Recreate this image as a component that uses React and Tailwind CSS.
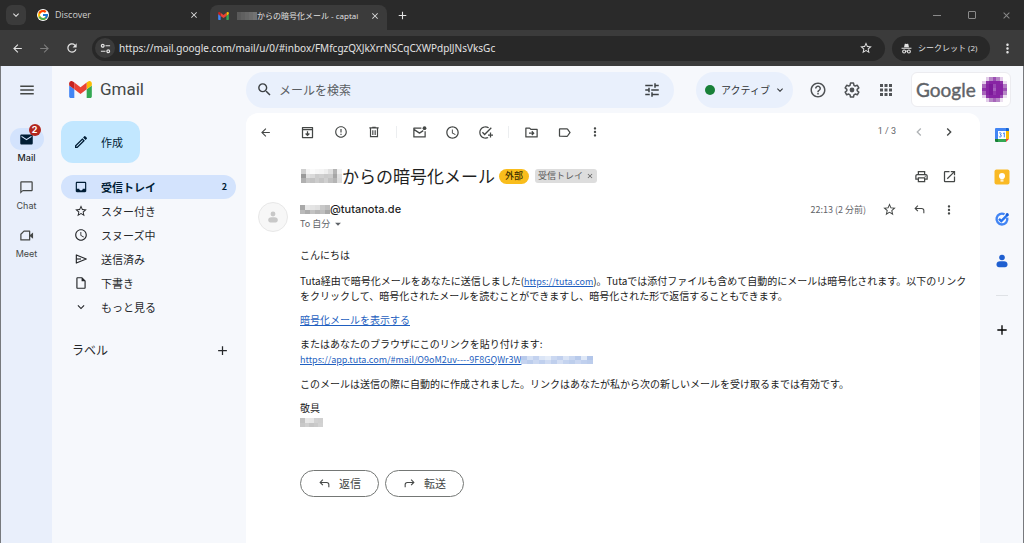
import React from "react";
import {
  MdAdd, MdAddTask, MdApps, MdArrowBack, MdArrowDropDown, MdArrowForward, MdChatBubbleOutline, MdChevronLeft,
  MdChevronRight, MdClose, MdErrorOutline, MdExpandMore, MdHelpOutline, MdInbox, MdLabelOutline, MdMail, MdMenu,
  MdMoreVert, MdOpenInNew, MdOutlineInsertDriveFile, MdOutlineModeEdit,
  MdOutlinePrint, MdRefresh, MdSchedule, MdSearch, MdStarBorder, MdTune,
} from "react-icons/md";
import { FcGoogle } from "react-icons/fc";

function GmailMark({ className }) {
  return (
    <svg viewBox="52 42 88 66" className={className} aria-hidden="true">
      <path fill="#4285f4" d="M58 108h14V74L52 59v43c0 3.32 2.69 6 6 6" />
      <path fill="#34a853" d="M120 108h14c3.32 0 6-2.69 6-6V59l-20 15" />
      <path fill="#fbbc04" d="M120 48v26l20-15v-8c0-7.42-8.47-11.65-14.4-7.2" />
      <path fill="#ea4335" d="M72 74V48l24 18 24-18v26L96 92" />
      <path fill="#c5221f" d="M52 51v8l20 15V48l-5.6-4.2c-5.94-4.45-14.4-.22-14.4 7.2" />
    </svg>
  );
}

/* Pixelated patch that hides a private name. */
function Mosaic({ rows, className }) {
  return (
    <svg
      viewBox={`0 0 ${rows[0].length} ${rows.length}`}
      preserveAspectRatio="none"
      shapeRendering="crispEdges"
      className={className}
      aria-hidden="true"
    >
      {rows.map((row, y) => row.map((c, x) => <rect key={`${x}-${y}`} x={x} y={y} width="1" height="1" fill={c} />))}
    </svg>
  );
}

const nameRows = [
  ["#cfcfcf", "#f4f4f4", "#fafafa", "#f6f6f6", "#f4f4f4", "#eeeeee", "#e0e0e0", "#b4b4b4", "#f0f0f0"],
  ["#9a9a9a", "#e0e0e0", "#dadada", "#cccccc", "#d0d0d0", "#cacaca", "#cccccc", "#a6a6a6", "#e0e0e0"],
  ["#b0b0b0", "#c6c6c6", "#c2c2c2", "#cccccc", "#c4c4c4", "#cfcfcf", "#c0c0c0", "#b4b4b4", "#dcdcdc"],
];
const senderRows = [
  ["#a8a8a8", "#e8e8e8", "#e4e4e4", "#e0e0e0", "#c8c8c8", "#bebebe"],
  ["#bababa", "#acacac", "#c2c2c2", "#b6b6b6", "#bebebe", "#a8a8a8"],
];
const signRows = [
  ["#c2c2c2", "#e8e8e8", "#e6e6e6", "#d2d2d2", "#d0d0d0"],
  ["#c8c8c8", "#d0d0d0", "#c6c6c6", "#cacaca", "#d2d2d2"],
];
const urlRows = [
  ["#b9cbec", "#d3dff4", "#c3d2ef", "#dbe5f6", "#e3ebf8", "#cbd8f1", "#c1d0ee", "#d9e3f5", "#c8d6f0", "#b8caeb", "#dfe8f7", "#b3c6ea"],
  ["#c5d3f0", "#bccdec", "#cbd8f1", "#c0d0ee", "#cfdbf2", "#bfcfed", "#d3def3", "#c4d3ef", "#bdceec", "#cad7f1", "#c0d0ee", "#bccdec"],
];
const tabRows = [["#5a5a5a", "#606060", "#666666", "#6c6c6c", "#737373"]];
const avatarRows = [
  ["#fff", "#e3cdea", "#b787c6", "#9c4fb4", "#b787c6", "#e3cdea", "#fff"],
  ["#e3cdea", "#8e33a8", "#8824a4", "#8824a4", "#8824a4", "#8e33a8", "#ecdff0"],
  ["#a765ba", "#8824a4", "#7d1a9b", "#9a4ab4", "#8824a4", "#8824a4", "#b27ac3"],
  ["#8e33a8", "#8824a4", "#7d1a9b", "#a65fbd", "#8824a4", "#8824a4", "#9c4fb4"],
  ["#a765ba", "#8824a4", "#7d1a9b", "#9338ad", "#8824a4", "#8824a4", "#b787c6"],
  ["#e3cdea", "#8e33a8", "#8824a4", "#8824a4", "#8824a4", "#9c4fb4", "#ecdff0"],
  ["#fff", "#e3cdea", "#b787c6", "#a765ba", "#b787c6", "#ecdff0", "#fff"],
];

function SiteSettingsIcon({ className }) {
  return (
    <svg viewBox="0 0 12 12" className={className} fill="none" stroke="currentColor" strokeWidth="1.3" aria-hidden="true">
      <circle cx="3" cy="3" r="1.5" />
      <path d="M6 3h5M1 9h5" />
      <circle cx="9" cy="9" r="1.5" />
    </svg>
  );
}

function IncognitoIcon({ className }) {
  return (
    <svg viewBox="0 0 12 12" className={className} aria-hidden="true">
      <path fill="currentColor" d="M3.300 4.600 4 1.300c.1-.5.500-.6.900-.5L6 1.200l1.100-.4c.4-.1.800 0 .9.500l.7 3.300zM.6 5.200h10.800v1.200H.6z" />
      <g fill="none" stroke="currentColor" strokeWidth="1.200">
        <circle cx="3.400" cy="9.300" r="1.600" />
        <circle cx="8.600" cy="9.300" r="1.600" />
        <path d="M5 9c.6-.4 1.400-.4 2 0" />
      </g>
    </svg>
  );
}

function LineIcon({ className, children }) {
  return (
    <svg viewBox="0 0 24 24" className={className} fill="none" stroke="currentColor" strokeWidth="2" aria-hidden="true">
      {children}
    </svg>
  );
}

const ArchiveIcon = ({ className }) => (
  <LineIcon className={className}>
    <path strokeLinejoin="round" d="M4 4h16v16H4zM4 7.500h16" />
    <path d="M12 10v6M9 13.500l3 3 3-3" />
  </LineIcon>
);

const TrashIcon = ({ className }) => (
  <LineIcon className={className}>
    <path d="M4 5h16M9 4h6M6 5.500V20h12V5.500M10 9v8M14 9v8" />
  </LineIcon>
);

const UnreadIcon = ({ className }) => (
  <LineIcon className={className}>
    <path strokeLinejoin="round" d="M15 5H3v14h18V10M3 7l9 6 6-4" />
    <circle cx="20" cy="5" r="3" fill="currentColor" stroke="none" />
  </LineIcon>
);

const MoveIcon = ({ className }) => (
  <LineIcon className={className}>
    <path strokeLinejoin="round" d="M3 5h6l2 2h10v12H3z" />
    <path d="M8 13h7M12.500 10l3 3-3 3" />
  </LineIcon>
);

const SendIcon = ({ className }) => (
  <LineIcon className={className}>
    <path strokeLinejoin="round" d="M4 5l17 7-17 7z" />
    <path d="M4 12h8" />
  </LineIcon>
);

const ReplyIcon = ({ className }) => (
  <LineIcon className={className}>
    <path d="M9 5 4 10l5 5M4 10h12a4 4 0 0 1 4 4v5" />
  </LineIcon>
);

const MeetIcon = ({ className }) => (
  <LineIcon className={className}>
    <path strokeLinejoin="round" d="M8 5h9v14H3v-9z" />
    <path fill="currentColor" stroke="none" d="m17.500 11 5-4v10l-5-4z" />
  </LineIcon>
);

function PersonIcon({ className }) {
  return (
    <svg viewBox="0 0 16 16" className={className} fill="currentColor" aria-hidden="true">
      <circle cx="8" cy="4.500" r="2.800" />
      <path d="M2.500 11.500c0-2 1.500-3.200 3.500-3.200h4c2 0 3.500 1.200 3.500 3.200 0 1.700-1 2.700-2.500 2.700H5c-1.500 0-2.500-1-2.500-2.700z" />
    </svg>
  );
}

function CalendarLogo() {
  return (
    <svg viewBox="0 0 16 16" className="size-4" aria-hidden="true">
      <path fill="#4285f4" d="M2 1h10v3H4v8H1V2a1 1 0 0 1 1-1z" />
      <path fill="#1967d2" d="M12 1h2a1 1 0 0 1 1 1v2h-3z" />
      <path fill="#fbbc04" d="M12 4h3v8h-3z" />
      <path fill="#34a853" d="M4 12h8v3H4z" />
      <path fill="#188038" d="M1 12h3v3H2a1 1 0 0 1-1-1z" />
      <path fill="#ea4335" d="M12 12h3l-3 3z" />
      <path fill="#fff" d="M4 4h8v8H4z" />
      <path fill="none" stroke="#4285f4" d="M5 6.300c.6-.9 2.300-.7 2.200.4 0 .7-.6 1-1.200 1 .8 0 1.400.4 1.400 1.200 0 1.200-2 1.500-2.600.3M9 6.600l1.300-.8v4.500" />
    </svg>
  );
}

function KeepLogo() {
  return (
    <svg viewBox="0 0 16 16" className="size-4" aria-hidden="true">
      <rect x=".5" y=".5" width="15" height="15" rx="2" fill="#f9b924" />
      <circle cx="8" cy="7" r="3" fill="#fff" />
      <path fill="#fff" d="M6.500 9h3v1.500h-3zM6.500 11.200h3v1.200h-3z" />
    </svg>
  );
}

function TasksLogo() {
  return (
    <svg viewBox="0 0 16 16" className="size-4" fill="none" aria-hidden="true">
      <path stroke="#4285f4" strokeWidth="2.400" d="M13.200 6.800A5.400 5.400 0 1 1 10.500 3.300" />
      <path stroke="#2874f0" strokeWidth="2.400" d="m5 7.800 2.300 2.300L14 3.400" />
      <circle cx="13.200" cy="3.600" r="1.500" fill="#1a5fd8" />
    </svg>
  );
}

function IconButton({ label, className = "", children }) {
  return (
    <button type="button" aria-label={label} className={`flex shrink-0 items-center justify-center ${className}`}>
      {children}
    </button>
  );
}

function BrowserChrome() {
  return (
    <header className="bg-[#3b3b3b] font-['Open_Sans','Noto_Sans_CJK_JP',sans-serif] text-[#e3e3e3]">
      <div className="flex h-[30px] items-center bg-[#2a2a2a] pl-[6px]">
        <IconButton label="タブを検索" className="size-5 rounded-md bg-[#3b3b3b]">
          <MdExpandMore className="size-3" />
        </IconButton>
        <div className="flex w-[184px] items-center pr-2 pl-[11px] text-[9px]">
          <span className="flex size-3 items-center justify-center rounded-full bg-white">
            <FcGoogle className="size-3" />
          </span>
          <span className="ml-[6px] flex-1 text-[#d0d0d0]">Discover</span>
          <IconButton label="タブを閉じる" className="size-4"><MdClose className="size-[10px]" /></IconButton>
        </div>
        <div className="mt-[5px] flex h-[25px] w-[177px] items-center rounded-t-lg bg-[#3b3b3b] pr-1 pb-1 pl-2 text-[8px]">
          <GmailMark className="h-2 w-[11px] shrink-0" />
          <Mosaic rows={tabRows} className="ml-2 h-2 w-[20px] shrink-0" />
          <span className="flex-1 whitespace-nowrap">からの暗号化メール - captai</span>
          <IconButton label="タブを閉じる" className="size-4"><MdClose className="size-[10px]" /></IconButton>
        </div>
        <IconButton label="新しいタブ" className="ml-[7px] size-4"><MdAdd className="size-[13px]" /></IconButton>
        <div className="ml-auto flex text-[#8a8a8a]">
          <IconButton label="最小化" className="h-5 w-[35px]"><span className="h-px w-2 bg-current" /></IconButton>
          <IconButton label="最大化" className="h-5 w-[35px]"><span className="size-2 rounded-[1px] border border-current" /></IconButton>
          <IconButton label="閉じる" className="h-5 w-[35px]"><MdClose className="size-[11px]" /></IconButton>
        </div>
      </div>
      <div className="flex h-9 items-center pl-1">
        <IconButton label="戻る" className="w-[27px]"><MdArrowBack className="size-[13px]" /></IconButton>
        <IconButton label="進む" className="w-[27px] text-[#7c7c7c]"><MdArrowForward className="size-[13px]" /></IconButton>
        <IconButton label="再読み込み" className="w-[27px]"><MdRefresh className="size-[14px]" /></IconButton>
        <div className="ml-[7px] flex h-[25px] flex-1 items-center rounded-full bg-[#282828] pr-3 pl-[3px]">
          <IconButton label="サイト情報" className="size-5 rounded-full bg-[#3b3b3b]"><SiteSettingsIcon className="size-[11px]" /></IconButton>
          <input
            aria-label="アドレス"
            className="ml-1 min-w-0 flex-1 bg-transparent font-['Noto_Sans',sans-serif] text-[10px] text-[#e3e3e3] outline-none"
            defaultValue="https://mail.google.com/mail/u/0/#inbox/FMfcgzQXJkXrrNSCqCXWPdplJNsVksGc"
          />
          <IconButton label="ブックマーク"><MdStarBorder className="size-[14px]" /></IconButton>
        </div>
        <button type="button" className="ml-[7px] flex h-[25px] w-[98px] items-center rounded-full bg-[#282828] pl-[9px] text-[8px] whitespace-nowrap">
          <IncognitoIcon className="size-[11px]" />
          <span className="ml-[6px]">シークレット (2)</span>
        </button>
        <IconButton label="メニュー" className="w-[34px]"><MdMoreVert className="size-[15px]" /></IconButton>
      </div>
    </header>
  );
}

function AppRail() {
  return (
    <nav aria-label="アプリ" className="flex w-[51px] shrink-0 flex-col items-center bg-[#e9effb] font-['Inter',sans-serif] text-[9px] leading-3 text-[#444746]">
      <IconButton label="メインメニュー" className="h-12 w-full"><MdMenu className="size-[18px]" /></IconButton>
      <a href="#mail" className="mt-[14px] flex flex-col items-center font-medium text-[#1f1f1f]">
        <span className="relative flex h-[22px] w-[34px] items-center justify-center rounded-full bg-[#d3e3fd]">
          <MdMail className="size-[15px] text-[#001d35]" />
          <span className="absolute -top-1 right-[3px] flex size-3 items-center justify-center rounded-full bg-[#b3261e] text-[9px] font-bold text-white">2</span>
        </span>
        <span className="mt-[2px]">Mail</span>
      </a>
      <a href="#chat" className="mt-[12px] flex flex-col items-center">
        <span className="flex h-[22px] items-center"><MdChatBubbleOutline className="size-[15px]" /></span>
        <span className="mt-[2px]">Chat</span>
      </a>
      <a href="#meet" className="mt-[12px] flex flex-col items-center">
        <span className="flex h-[22px] items-center"><MeetIcon className="size-[15px]" /></span>
        <span className="mt-[2px]">Meet</span>
      </a>
    </nav>
  );
}

function TopBar() {
  return (
    <div className="flex h-[47px] items-center pr-3">
      <div className="flex w-[194px] shrink-0 items-center pl-[17px]">
        <GmailMark className="h-[17px] w-[23px]" />
        <span className="ml-2 font-['Roboto',sans-serif] text-[17px] text-[#444746]">Gmail</span>
      </div>
      <form className="flex h-9 flex-1 items-center rounded-full bg-[#e9f0fc] pr-[13px] pl-[10px] text-[#3c4043]">
        <IconButton label="検索"><MdSearch className="size-[17px]" /></IconButton>
        <input
          type="search"
          aria-label="メールを検索"
          placeholder="メールを検索"
          className="ml-[6px] min-w-0 flex-1 bg-transparent text-[12px] outline-none placeholder:text-[#5a5e63]"
        />
        <IconButton label="検索オプション"><MdTune className="size-[18px]" /></IconButton>
      </form>
      <button type="button" className="ml-[22px] flex h-9 w-[97px] items-center rounded-full bg-[#e9f0fc] pl-[9px] text-[10px] whitespace-nowrap text-[#303336]">
        <span className="size-[10px] rounded-full bg-[#188038]" />
        <span className="ml-[6px]">アクティブ</span>
        <MdExpandMore className="ml-1 size-3" />
      </button>
      <div className="ml-2 flex text-[#505356]">
        <IconButton label="サポート" className="w-[34px]"><MdHelpOutline className="size-[18px]" /></IconButton>
        <IconButton label="設定" className="w-[34px]"><MdOutlineSettings className="size-[18px]" /></IconButton>
        <IconButton label="Google アプリ" className="w-[34px]"><MdApps className="size-[18px]" /></IconButton>
      </div>
      <button type="button" className="ml-2 flex h-[35px] w-[100px] items-center rounded-md border border-[#ececf0] bg-white pl-1">
        <span className="w-[62px] text-left font-['Lato',sans-serif] text-[19px] leading-none text-[#5f6368] [-webkit-text-stroke:0.4px]">Google</span>
        <Mosaic rows={avatarRows} className="ml-1 size-[25px]" />
      </button>
    </div>
  );
}

function MdOutlineSettings({ className }) {
  return (
    <LineIcon className={className}>
      <path
        strokeLinejoin="round"
        d="M10 2.800h4l.6 2.900 1.700 1 2.800-1 2 3.500-2.200 1.900v1.900l2.200 1.900-2 3.500-2.800-1-1.700 1-.6 2.900h-4l-.6-2.900-1.700-1-2.800 1-2-3.500 2.200-1.900v-1.900L2.900 9.200l2-3.500 2.800 1 1.700-1z"
      />
      <circle cx="12" cy="12" r="3.200" fill="currentColor" stroke="none" />
    </LineIcon>
  );
}

const folders = [
  { label: "スター付き", Icon: MdStarBorder },
  { label: "スヌーズ中", Icon: MdSchedule },
  { label: "送信済み", Icon: SendIcon },
  { label: "下書き", Icon: MdOutlineInsertDriveFile },
  { label: "もっと見る", Icon: MdExpandMore },
];

function Folders() {
  return (
    <nav aria-label="フォルダ" className="w-[194px] shrink-0 pt-2 pr-[10px] pl-[9px] text-[11px] text-[#26282b]">
      <button type="button" className="flex h-[42px] w-[79px] items-center rounded-xl bg-[#c2e7ff] pl-3 text-[#001d35]">
        <MdOutlineModeEdit className="size-4" />
        <span className="ml-3">作成</span>
      </button>
      <ul className="mt-3">
        <li>
          <a href="#inbox" className="flex h-6 items-center rounded-full bg-[#d3e3fd] pr-[9px] pl-[13px] font-bold text-[#001d35]">
            <MdInbox className="size-[14px]" />
            <span className="ml-[13px] flex-1">受信トレイ</span>
            <span className="text-[9px]">2</span>
          </a>
        </li>
        {folders.map(({ label, Icon }) => (
          <li key={label}>
            <a href="#folder" className="flex h-6 items-center pl-[13px]">
              <Icon className="size-[14px]" />
              <span className="ml-[13px]">{label}</span>
            </a>
          </li>
        ))}
      </ul>
      <div className="mt-[22px] flex items-center justify-between pr-[6px] pl-[11px]">
        <h2 className="text-[12px]">ラベル</h2>
        <IconButton label="新しいラベル"><MdAdd className="size-[15px]" /></IconButton>
      </div>
    </nav>
  );
}

function Divider() {
  return <span className="mx-[6px] h-3 w-px bg-[#eceef0]" />;
}

function MailPanel() {
  return (
    <main className="min-w-0 flex-1 rounded-t-xl bg-white text-[#222]">
      <div className="flex h-[38px] items-center pr-4 pl-[3px] text-[#444746]">
        <IconButton label="受信トレイに戻る" className="mr-[9px] w-[33px]"><MdArrowBack className="size-[13px]" /></IconButton>
        <IconButton label="アーカイブ" className="w-[33px]"><ArchiveIcon className="size-[15px]" /></IconButton>
        <IconButton label="迷惑メールを報告" className="w-[33px]"><MdErrorOutline className="size-[14px]" /></IconButton>
        <IconButton label="削除" className="w-[33px]"><TrashIcon className="size-[14px]" /></IconButton>
        <Divider />
        <IconButton label="未読にする" className="w-[33px]"><UnreadIcon className="size-[15px]" /></IconButton>
        <IconButton label="スヌーズ" className="w-[33px]"><MdSchedule className="size-[15px]" /></IconButton>
        <IconButton label="ToDo に追加" className="w-[33px]"><MdAddTask className="size-[15px]" /></IconButton>
        <Divider />
        <IconButton label="移動" className="w-[33px]"><MoveIcon className="size-[15px]" /></IconButton>
        <IconButton label="ラベル" className="w-[33px]"><MdLabelOutline className="size-[15px]" /></IconButton>
        <IconButton label="その他" className="w-[27px]"><MdMoreVert className="size-[14px]" /></IconButton>
        <span className="mr-2 ml-auto font-['Roboto',sans-serif] text-[9px] text-[#5f6368]">1 / 3</span>
        <IconButton label="前へ" className="w-[30px] text-[#b0b3b6]"><MdChevronLeft className="size-4" /></IconButton>
        <IconButton label="次へ" className="w-[30px]"><MdChevronRight className="size-4" /></IconButton>
      </div>

      <div className="flex h-[50px] items-center pr-[17px] pl-[55px] text-[#444746]">
        <Mosaic rows={nameRows} className="h-[14px] w-[41px]" />
        <h1 className="text-[17px] whitespace-nowrap text-[#1f1f1f]">からの暗号化メール</h1>
        <span className="ml-1 flex h-[15px] items-center rounded-full bg-[#f9bd1c] px-[6px] text-[9px] font-medium text-[#3c3000]">外部</span>
        <span className="ml-[6px] flex h-[14px] items-center gap-[3px] rounded-[3px] bg-[#dddddd] px-[3px] text-[9px] text-[#5a5a5a]">
          受信トレイ
          <IconButton label="ラベルを削除"><MdClose className="size-2" /></IconButton>
        </span>
        <IconButton label="印刷" className="ml-auto w-7"><MdOutlinePrint className="size-[15px]" /></IconButton>
        <IconButton label="新しいウィンドウ" className="w-7"><MdOpenInNew className="size-[15px]" /></IconButton>
      </div>

      <div className="flex items-start pr-4 pl-3 text-[#444746]">
        <span className="mt-[1px] flex size-[30px] shrink-0 items-center justify-center rounded-full border border-[#e8e8e8] bg-[#f7f7f7]">
          <PersonIcon className="size-[14px] text-[#c8c8c8]" />
        </span>
        <div className="ml-3">
          <div className="flex h-4 items-center font-['Inter',sans-serif] text-[11px] font-medium text-[#1f1f1f]">
            <Mosaic rows={senderRows} className="h-[9px] w-[30px]" />
            @tutanota.de
          </div>
          <button type="button" className="flex h-[14px] items-center text-[9px] text-[#5f6368]">
            To 自分
            <MdArrowDropDown className="ml-[1px] size-[14px]" />
          </button>
        </div>
        <div className="ml-auto flex h-[17px] items-center">
          <time className="mr-2 text-[9px] text-[#5f6368]">22:13 (2 分前)</time>
          <IconButton label="スター" className="w-[30px]"><MdStarBorder className="size-[15px]" /></IconButton>
          <IconButton label="返信" className="w-[30px]"><ReplyIcon className="size-[13px]" /></IconButton>
          <IconButton label="その他" className="w-[30px]"><MdMoreVert className="size-[14px]" /></IconButton>
        </div>
      </div>

      <article className="mt-4 flex flex-col gap-[10px] pr-3 pl-[54px] text-[10px] leading-[14px]">
        <p className="mb-[2px]">こんにちは</p>
        <p>
          Tuta経由で暗号化メールをあなたに送信しました(
          <a href="#tuta" className="text-[9px] text-[#1f5fc0] underline">https://tuta.com</a>
          )。Tutaでは添付ファイルも含めて自動的にメールは暗号化されます。以下のリンクをクリックして、暗号化されたメールを読むことができますし、暗号化された形で返信することもできます。
        </p>
        <p><a href="#open" className="text-[#1f5fc0] underline">暗号化メールを表示する</a></p>
        <div>
          <p>またはあなたのブラウザにこのリンクを貼り付けます:</p>
          <p className="mt-[2px] flex items-center">
            <a href="#link" className="text-[9px] text-[#1f5fc0] underline">https://app.tuta.com/#mail/O9oM2uv----9F8GQWr3W</a>
            <Mosaic rows={urlRows} className="h-2 w-[72px]" />
          </p>
        </div>
        <p>このメールは送信の際に自動的に作成されました。リンクはあなたが私から次の新しいメールを受け取るまでは有効です。</p>
        <div>
          <p>敬具</p>
          <Mosaic rows={signRows} className="mt-[3px] h-[9px] w-[23px]" />
        </div>
      </article>

      <div className="mt-[43px] flex gap-[6px] pb-12 pl-[54px] text-[11px] text-[#444746]">
        <button type="button" className="flex h-[27px] w-[79px] items-center justify-center gap-2 rounded-full border border-[#747775]">
          <ReplyIcon className="size-[13px]" />
          返信
        </button>
        <button type="button" className="flex h-[27px] w-[79px] items-center justify-center gap-2 rounded-full border border-[#747775]">
          <ReplyIcon className="size-[13px] -scale-x-100" />
          転送
        </button>
      </div>
    </main>
  );
}

function SidePanel() {
  return (
    <aside className="flex w-[43px] shrink-0 flex-col items-center pt-[14px]">
      <div className="flex flex-col gap-[26px]">
        <IconButton label="カレンダー"><CalendarLogo /></IconButton>
        <IconButton label="Keep"><KeepLogo /></IconButton>
        <IconButton label="ToDo リスト"><TasksLogo /></IconButton>
        <IconButton label="連絡先"><PersonIcon className="size-4 text-[#1f5fd0]" /></IconButton>
      </div>
      <span className="mt-[26px] h-px w-3 bg-[#dfe2e6]" />
      <IconButton label="アドオンを取得" className="mt-[26px]"><MdAdd className="size-4" /></IconButton>
    </aside>
  );
}

export default function App() {
  return (
    <div lang="ja" className="flex min-h-screen flex-col bg-[#f6f8fc] font-['Noto_Sans_CJK_JP',sans-serif]">
      <BrowserChrome />
      <div className="flex flex-1 border-x border-[#77797d]">
        <AppRail />
        <div className="flex min-w-0 flex-1 flex-col">
          <TopBar />
          <div className="flex flex-1">
            <Folders />
            <MailPanel />
            <SidePanel />
          </div>
        </div>
      </div>
    </div>
  );
}
